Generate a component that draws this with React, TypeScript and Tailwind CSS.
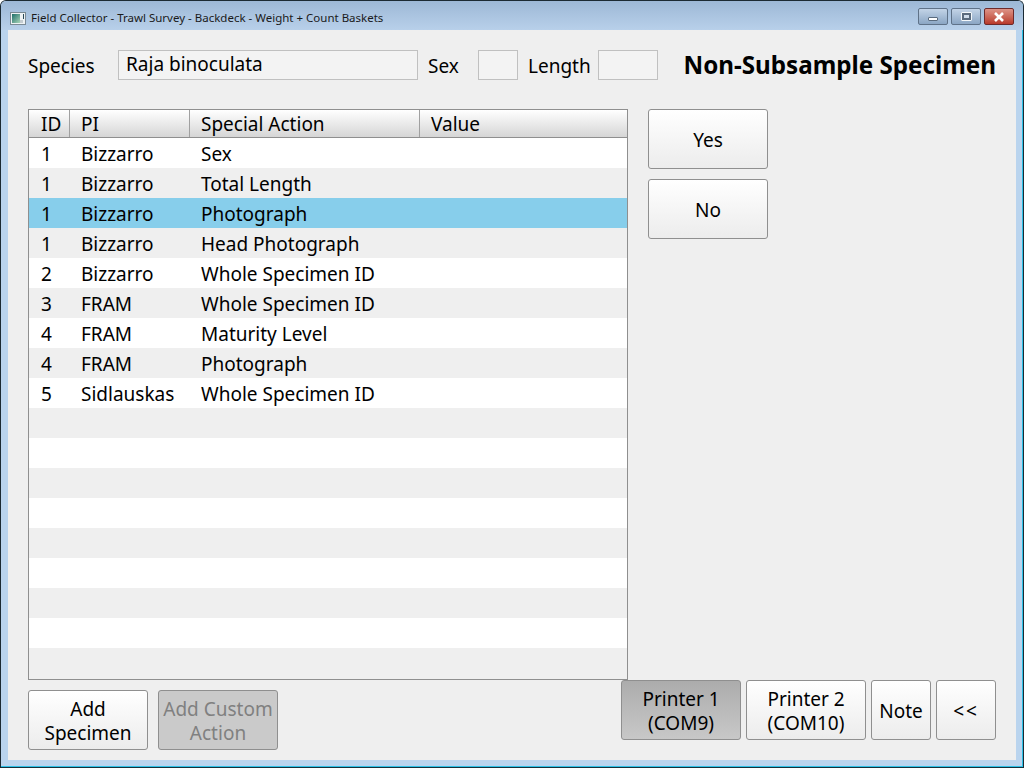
const rows: [string, string, string][] = [
  ["1", "Bizzarro", "Sex"],
  ["1", "Bizzarro", "Total Length"],
  ["1", "Bizzarro", "Photograph"],
  ["1", "Bizzarro", "Head Photograph"],
  ["2", "Bizzarro", "Whole Specimen ID"],
  ["3", "FRAM", "Whole Specimen ID"],
  ["4", "FRAM", "Maturity Level"],
  ["4", "FRAM", "Photograph"],
  ["5", "Sidlauskas", "Whole Specimen ID"],
];

const emptyRows = Array.from({ length: 9 }, (_, i) => i);

const btn =
  "flex h-[60px] flex-col items-center justify-center rounded-[3px] border border-[#8f8f8f] pt-[1px] text-[19px] leading-[24px]";
const btnNormal = "bg-gradient-to-b from-white to-[#ececec]";

const HeaderCell = ({ label, className }: { label: string; className: string }) => (
  <div className={`flex h-full items-center border-r border-[#a0a0a0] pt-[1px] ${className}`}>{label}</div>
);

export default function App() {
  return (
    <div
      className="flex h-[768px] w-[1024px] flex-col overflow-hidden rounded-t-[6px] border border-[#1c2a33] border-b-[#14303c] bg-[#bad4ee] px-[7px] pb-[7px] shadow-[inset_-1px_-1px_0_#2cc0e6]"
      style={{ fontFamily: '"Noto Sans", sans-serif' }}
    >
      {/* title bar */}
      <div className="-mx-[7px] flex h-[29px] shrink-0 items-center justify-between bg-gradient-to-b from-[#9db8d6] to-[#b8d0ea] px-[7px] pt-[5px]">
        <div className="flex items-center gap-[5px] pl-[2px] text-[11.5px] text-[#1a1a1a]">
          <svg width="16" height="13" viewBox="0 0 16 13">
            <defs>
              <linearGradient id="ico" x1="0" y1="0" x2="1" y2="1">
                <stop offset="0" stopColor="#1f6f6a" />
                <stop offset="1" stopColor="#a8d4b8" />
              </linearGradient>
            </defs>
            <rect x="0.5" y="0.5" width="15" height="12" fill="#eef2f4" stroke="#7a8a94" />
            <rect x="2" y="2" width="8" height="9" fill="url(#ico)" />
            <rect x="10" y="8" width="3" height="3" fill="#c4ccd0" />
            <rect x="13" y="2" width="1" height="5" fill="#2a4a5a" />
          </svg>
          <span>Field Collector - Trawl Survey - Backdeck - Weight + Count Baskets</span>
        </div>
        <div className="mb-[3px] flex items-center gap-[3px] pr-[2px]">
          <div className="flex h-[17px] w-[30px] items-end justify-center rounded-[2px] border border-[#5f7288] bg-gradient-to-b from-[#c3d4e7] to-[#8ba6c4] pb-[3px]">
            <div className="h-[4px] w-[10px] rounded-[1px] border border-[#5a6b7e] bg-white" />
          </div>
          <div className="flex h-[17px] w-[30px] items-center justify-center rounded-[2px] border border-[#5f7288] bg-gradient-to-b from-[#c3d4e7] to-[#8ba6c4]">
            <div className="flex h-[9px] w-[11px] items-center justify-center rounded-[1px] border border-[#f4f8fb] bg-[#5a6b7e]">
              <div className="h-[3px] w-[5px] bg-[#cfdcea]" />
            </div>
          </div>
          <div className="flex h-[17px] w-[30px] items-center justify-center rounded-[2px] border border-[#6e2a2a] bg-gradient-to-b from-[#dd9387] to-[#b8392b]">
            <svg width="12" height="10" viewBox="0 0 12 10">
              <path d="M2 1 L10 9 M10 1 L2 9" stroke="#fff" strokeWidth="2.6" />
            </svg>
          </div>
        </div>
      </div>

      {/* client area */}
      <div className="flex min-h-0 flex-1 flex-col bg-[#efefef] px-[20px] pt-[20px] text-[19px] text-black">
        <div className="flex h-[30px] shrink-0 items-center">
          <span className="w-[90px] pt-[2px]">Species</span>
          <div className="flex h-[30px] w-[300px] items-center border border-[#c0c0c0] bg-[#f3f3f3] pb-[1px] pl-[7px]">
            Raja binoculata
          </div>
          <span className="ml-[10px] w-[50px] pt-[2px]">Sex</span>
          <div className="h-[30px] w-[40px] border border-[#c0c0c0] bg-[#f3f3f3]" />
          <span className="ml-[10px] w-[70px] pt-[2px]">Length</span>
          <div className="h-[30px] w-[60px] border border-[#c0c0c0] bg-[#f3f3f3]" />
          <span className="ml-auto pt-[1px] text-[24.2px] font-bold">Non-Subsample Specimen</span>
        </div>

        <div className="mt-[29px] flex gap-[20px]">
          <div className="flex h-[571px] w-[600px] flex-col overflow-hidden border border-[#8f8f8f] bg-[#efefef]">
            <div className="flex h-[28px] shrink-0 items-center border-b border-[#8f8f8f] bg-gradient-to-b from-white to-[#d6d6d6]">
              <HeaderCell label="ID" className="w-[41px] pl-[12px]" />
              <HeaderCell label="PI" className="w-[120px] pl-[11px]" />
              <HeaderCell label="Special Action" className="w-[230px] pl-[11px]" />
              <div className="pl-[11px] pt-[1px]">Value</div>
            </div>
            {rows.map(([id, pi, action], i) => (
              <div
                key={i}
                className={`flex h-[30px] shrink-0 items-center pt-[2px] ${
                  i === 2 ? "bg-[#87ceeb]" : i % 2 === 0 ? "bg-white" : "bg-[#efefef]"
                }`}
              >
                <span className="w-[41px] pl-[12px]">{id}</span>
                <span className="w-[120px] pl-[11px]">{pi}</span>
                <span className="pl-[11px]">{action}</span>
              </div>
            ))}
            {emptyRows.map((i) => (
              <div key={i} className={`h-[30px] shrink-0 ${i % 2 === 0 ? "bg-[#efefef]" : "bg-white"}`} />
            ))}
          </div>
          <div className="flex flex-col gap-[10px]">
            <div className={`${btn} ${btnNormal} w-[120px]`}>Yes</div>
            <div className={`${btn} ${btnNormal} w-[120px]`}>No</div>
          </div>
        </div>

        <div className="flex justify-between">
          <div className="mt-[10px] flex gap-[10px]">
            <div className={`${btn} ${btnNormal} w-[120px]`}>
              <span>Add</span>
              <span>Specimen</span>
            </div>
            <div className={`${btn} w-[120px] bg-[#cacaca] text-[#808080]`}>
              <span>Add Custom</span>
              <span>Action</span>
            </div>
          </div>
          <div className="flex gap-[5px]">
            <div className={`${btn} w-[120px] bg-gradient-to-b from-[#acacac] to-[#c8c8c8]`}>
              <span>Printer 1</span>
              <span>(COM9)</span>
            </div>
            <div className={`${btn} ${btnNormal} w-[120px]`}>
              <span>Printer 2</span>
              <span>(COM10)</span>
            </div>
            <div className={`${btn} ${btnNormal} w-[60px]`}>Note</div>
            <div className={`${btn} ${btnNormal} w-[60px] tracking-[2px]`}>&lt;&lt;</div>
          </div>
        </div>
      </div>
    </div>
  );
}
